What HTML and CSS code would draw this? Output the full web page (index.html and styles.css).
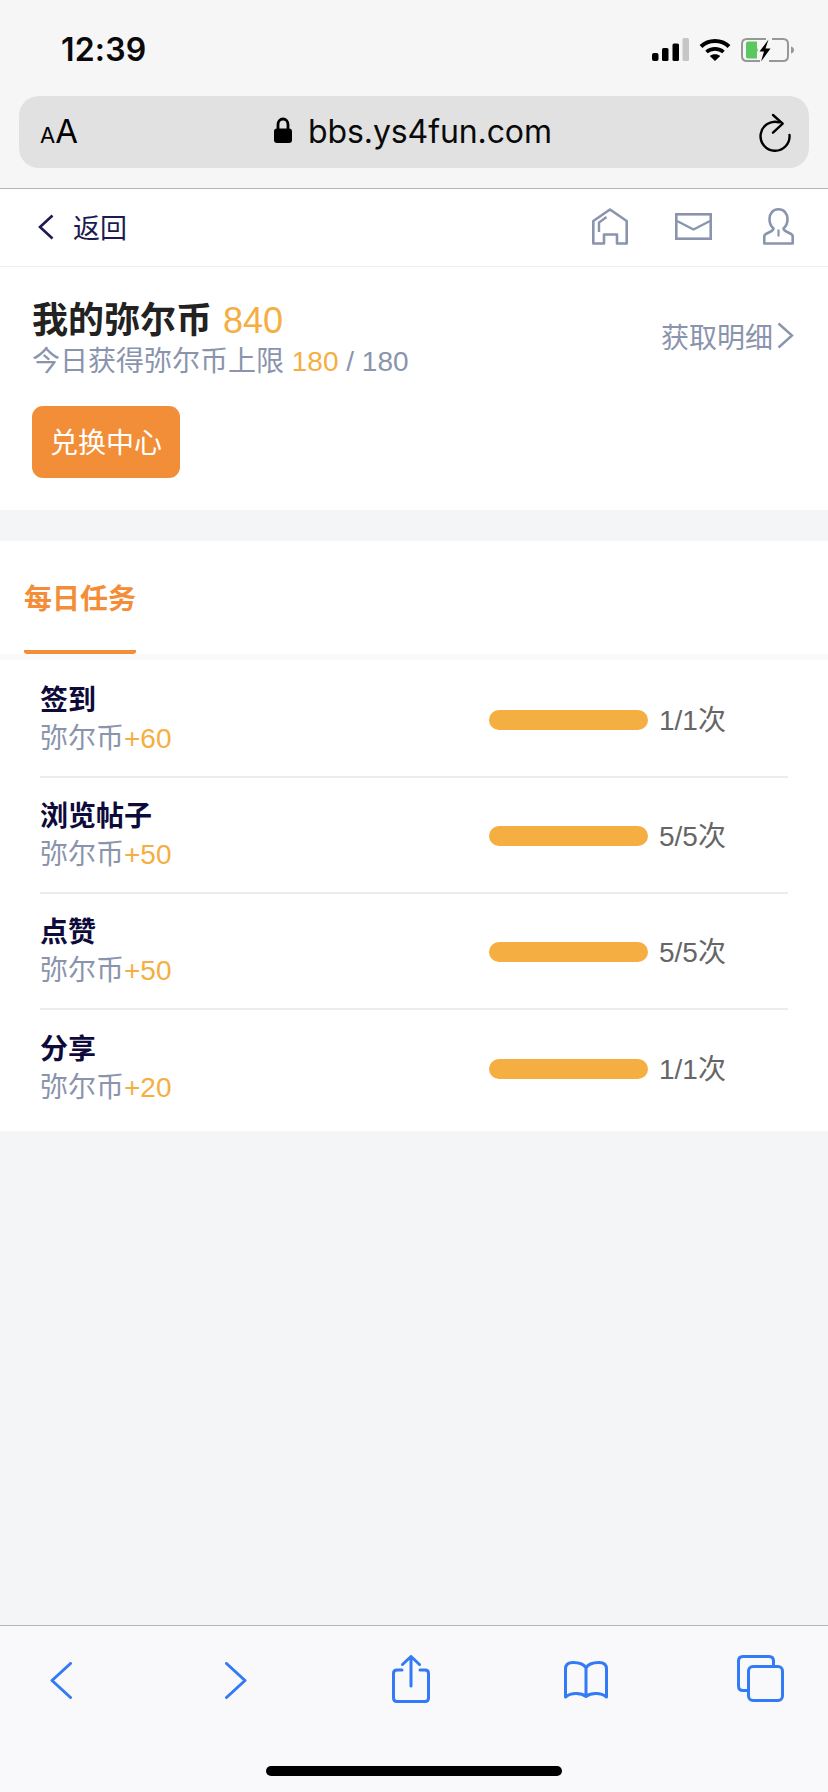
FILE: index.html
```html
<!DOCTYPE html>
<html lang="zh-CN">
<head>
<meta charset="utf-8">
<title>我的弥尔币</title>
<link rel="stylesheet" href="styles.css">
</head>
<body>
<div class="phone">
  <header class="chrome">
    <div class="status">
      <span class="time">12:39</span>
      <div class="status-icons">
        <svg class="signal" width="37" height="23" viewBox="0 0 37 23"><rect x="0" y="15" width="6.5" height="8" rx="2" fill="#000"/><rect x="10" y="10" width="6.5" height="13" rx="1.5" fill="#000"/><rect x="20.5" y="5.5" width="6.5" height="17.5" rx="1.5" fill="#000"/><rect x="30.500" y="0" width="6.500" height="23" rx="1.500" fill="#c6c6c6"/></svg>
        <svg class="wifi" width="32" height="23" viewBox="0 0 32 23"><path d="M2 8.500C9.500 1 22.500 1 30 8.500" fill="none" stroke="#000" stroke-width="4"/><path d="M7.500 14C12 9.800 20 9.800 24.500 14" fill="none" stroke="#000" stroke-width="3.600"/><path d="M16 23L10.800 18C13.500 15.800 18.500 15.800 21.200 18Z" fill="#000"/></svg>
        <svg class="battery" width="53" height="24" viewBox="0 0 53 24"><path d="M25 1H6Q1 1 1 6V18Q1 23 6 23H19M28 23H42Q47 23 47 18V6Q47 1 42 1H31" fill="none" stroke="#979797" stroke-width="2"/><path d="M7 3.500H16V10L17 12L16 14V20.500H7Q5 20.500 5 18.500V5.500Q5 3.500 7 3.500Z" fill="#5ac85f"/><path d="M27.500 1.500L18.500 13.500H23L20 23.500L29.500 10.500H24.500Z" fill="#000"/><path d="M50 8.500Q53 9.500 53 12Q53 14.500 50 15.500Z" fill="#979797"/></svg>
      </div>
    </div>
    <div class="urlbar">
      <span class="aa"><span class="aa-small">A</span><span class="aa-big">A</span></span>
      <div class="address">
        <svg class="lock" width="18" height="26" viewBox="0 0 18 26"><path d="M4 13V7.500C4 4.500 6 2 9 2C12 2 14 4.500 14 7.500V13" fill="none" stroke="#000" stroke-width="2.800"/><rect x="0" y="11.500" width="18" height="14.500" rx="3" fill="#000"/></svg>
        <span class="host">bbs.ys4fun.com</span>
      </div>
      <svg class="reload" width="34" height="39" viewBox="0 0 34 39"><path d="M21 9.300A14.500 14.500 0 1 0 31.500 22" fill="none" stroke="#000" stroke-width="2.400" stroke-linecap="round"/><path d="M15 2L24.700 10.700L15 19.700" fill="none" stroke="#000" stroke-width="2.400" stroke-linecap="round" stroke-linejoin="round"/></svg>
    </div>
  </header>

  <nav class="topnav">
    <div class="back">
      <svg width="16" height="26" viewBox="0 0 16 26"><path d="M14.500 1.500L2 13L14.500 24.500" fill="none" stroke="#1b1a52" stroke-width="2.600"/></svg>
      <span>返回</span>
    </div>
    <div class="nav-icons">
      <svg width="36" height="37" viewBox="0 0 36 37"><path d="M1.300 35.500V13L18 1.500L34.700 13V35.500H25V26.500H12V35.500Z" fill="none" stroke="#8a94ad" stroke-width="2.600" stroke-linejoin="round"/><path d="M7 24V14.500L14.500 9" fill="none" stroke="#8a94ad" stroke-width="2.400"/></svg>
      <svg class="nav-mail" width="37" height="27" viewBox="0 0 37 27"><rect x="1.300" y="1.300" width="34.400" height="24.400" fill="none" stroke="#8a94ad" stroke-width="2.600"/><path d="M2 8L18.500 16.500L35 8" fill="none" stroke="#8a94ad" stroke-width="2.400"/></svg>
      <svg width="31" height="37" viewBox="0 0 31 37"><path d="M1.300 35.500V28C1.300 25 10 24.500 10.500 20.500C7.500 18 6.500 14.500 6.500 11C6.500 5.500 10 1.300 15.500 1.300C21 1.300 24.500 5.500 24.500 11C24.500 14.500 23.500 18 20.500 20.500C21 24.500 29.700 25 29.700 28V35.500Z" fill="none" stroke="#8a94ad" stroke-width="2.600" stroke-linejoin="round"/><path d="M15.500 21.500V28.500" fill="none" stroke="#8a94ad" stroke-width="2.200"/></svg>
    </div>
  </nav>

  <section class="coin-card">
    <div class="coin-top">
      <div>
        <div class="coin-title"><strong>我的弥尔币</strong><span class="coin-count">840</span></div>
        <div class="coin-limit">今日获得弥尔币上限 <span class="orange">180</span> / 180</div>
      </div>
      <div class="detail">
        <span>获取明细</span>
        <svg width="17" height="27" viewBox="0 0 17 27"><path d="M1.500 1.500L15 13.500L1.500 25.500" fill="none" stroke="#8a94ad" stroke-width="2.400"/></svg>
      </div>
    </div>
    <div class="exchange">兑换中心</div>
  </section>

  <section class="tabs">
    <div class="tab">每日任务</div>
  </section>
  <div class="tab-shade"></div>

  <ul class="tasks">
    <li class="task">
      <div class="task-info"><div class="task-name">签到</div><div class="task-reward">弥尔币<span class="orange">+60</span></div></div>
      <div class="task-progress"><div class="bar"></div><span class="count">1/1次</span></div>
    </li>
    <li class="task">
      <div class="task-info"><div class="task-name">浏览帖子</div><div class="task-reward">弥尔币<span class="orange">+50</span></div></div>
      <div class="task-progress"><div class="bar"></div><span class="count">5/5次</span></div>
    </li>
    <li class="task">
      <div class="task-info"><div class="task-name">点赞</div><div class="task-reward">弥尔币<span class="orange">+50</span></div></div>
      <div class="task-progress"><div class="bar"></div><span class="count">5/5次</span></div>
    </li>
    <li class="task">
      <div class="task-info"><div class="task-name">分享</div><div class="task-reward">弥尔币<span class="orange">+20</span></div></div>
      <div class="task-progress"><div class="bar"></div><span class="count">1/1次</span></div>
    </li>
  </ul>

  <div class="spacer"></div>

  <footer class="toolbar">
    <div class="tools">
      <div class="tool"><svg width="22" height="37" viewBox="0 0 22 37"><path d="M20.500 1.500L2 18.500L20.500 35.500" fill="none" stroke="#327af6" stroke-width="3" stroke-linecap="round" stroke-linejoin="round"/></svg></div>
      <div class="tool"><svg width="22" height="37" viewBox="0 0 22 37"><path d="M1.500 1.500L20 18.500L1.500 35.500" fill="none" stroke="#327af6" stroke-width="3" stroke-linecap="round" stroke-linejoin="round"/></svg></div>
      <div class="tool"><svg class="tool-up" width="38" height="48" viewBox="0 0 38 48"><path d="M10 15H5Q1.500 15 1.500 18.500V43Q1.500 46.500 5 46.500H33Q36.500 46.500 36.500 43V18.500Q36.500 15 33 15H28M19 31V2M10.500 9.500L19 1.500L27.500 9.500" fill="none" stroke="#327af6" stroke-width="3" stroke-linecap="round" stroke-linejoin="round"/></svg></div>
      <div class="tool"><svg width="44" height="38" viewBox="0 0 44 38"><path d="M22 35.500C17 31.500 7 31.500 1.500 36V8C1.500 4 4 1.500 9 1.500C15 1.500 20 3 22 7C24 3 29 1.500 35 1.500C40 1.500 42.500 4 42.500 8V36C37 31.500 27 31.500 22 35.500ZM22 7V35.500" fill="none" stroke="#327af6" stroke-width="3" stroke-linejoin="round"/></svg></div>
      <div class="tool"><svg class="tool-up" width="47" height="47" viewBox="0 0 47 47"><path d="M11 35.500H6Q1.500 35.500 1.500 31V6Q1.500 1.500 6 1.500H32Q36.500 1.500 36.500 6V11" fill="none" stroke="#327af6" stroke-width="3"/><rect x="11.500" y="11.500" width="34" height="34" rx="4.500" fill="none" stroke="#327af6" stroke-width="3"/></svg></div>
    </div>
    <div class="home-bar"></div>
  </footer>
</div>
</body>
</html>
```
FILE: styles.css
```css
* { box-sizing: border-box; }
html, body { margin: 0; padding: 0; }
body {
  width: 828px;
  height: 1792px;
  overflow: hidden;
  font-family: "Liberation Sans", "Noto Sans CJK SC", sans-serif;
  background: #f4f5f7;
}
.phone { display: flex; flex-direction: column; height: 1792px; }
.orange { color: #f5ae42; }

.chrome { height: 189px; background: #f6f6f6; border-bottom: 1px solid #b4b4b4; padding: 0 19px; font-family: "Inter", sans-serif; }
.status { height: 96px; display: flex; justify-content: space-between; padding: 32px 0 0 42px; align-items: flex-start; }
.time { font-size: 32px; font-weight: 600; line-height: 35px; color: #0a0a0a; letter-spacing: .2px; }
.status-icons { display: flex; align-items: flex-start; gap: 10px; padding: 6px 15px 0 0; }
.urlbar { height: 72px; background: #e1e1e1; border-radius: 20px; display: flex; align-items: center; padding: 0 17px 0 22px; }
.aa { display: flex; align-items: baseline; color: #000; width: 40px; margin-top: 2px; }
.aa-small { font-size: 22px; line-height: 36px; font-weight: 400; margin-left: -1px; }
.aa-big { font-size: 33px; line-height: 36px; font-weight: 400; }
.address { flex: 1; display: flex; align-items: center; gap: 16px; padding-left: 193px; }
.host { font-size: 32px; color: #0a0a0a; line-height: 40px; letter-spacing: -.1px; }
.lock { margin-top: -4px; }

.topnav { height: 78px; background: #fff; border-bottom: 1px solid #eeeeee; display: flex; justify-content: space-between; align-items: center; padding: 0 34px 2px 38px; }
.back { display: flex; align-items: center; gap: 19px; color: #1b1a52; font-size: 27px; font-family: "Noto Sans CJK SC", sans-serif; }
.nav-icons { display: flex; align-items: center; gap: 48px; }
.nav-mail { margin: 0 3px 0 -1px; }

.coin-card { height: 243px; background: #fff; padding: 32px 34px 0 32px; }
.coin-top { display: flex; justify-content: space-between; align-items: center; }
.coin-title { font-size: 36px; line-height: 44px; color: #222; display: flex; align-items: baseline; gap: 11px; }
.coin-title strong { font-weight: 700; }
.coin-count { color: #f5ae42; font-weight: 400; }
.coin-limit { font-size: 28px; line-height: 34px; color: #8a94ad; margin-top: 2px; }
.detail { display: flex; align-items: center; gap: 4px; font-size: 28px; color: #8a94ad; padding-bottom: 7px; }
.exchange { width: 148px; height: 72px; background: #f28e37; border-radius: 11px; color: #fff; font-size: 28px; line-height: 75px; text-align: center; margin-top: 27px; }

.tabs { margin-top: 31px; height: 113px; background: #fff; padding-left: 24px; }
.tab { width: 112px; height: 113px; padding-top: 5px; border-bottom: 4px solid #f28e37; border-radius: 0 0 3px 3px; color: #f38d37; font-size: 28px; font-weight: 700; line-height: 108px; text-align: center; white-space: nowrap; }
.tab-shade { height: 6px; background: #fafafb; }

.tasks { list-style: none; margin: 0; padding: 2px 40px 0; background: #fff; height: 471px; }
.task { height: 116px; display: flex; align-items: center; justify-content: space-between; border-bottom: 2px solid #ececee; padding: 2px 62px 0 0; }
.task:last-child { border-bottom: 0; }
.task-name { font-size: 28px; line-height: 38px; font-weight: 700; color: #0e0b3b; }
.task-reward { font-size: 28px; line-height: 38px; color: #8a94ad; }
.task-progress { display: flex; align-items: center; gap: 10px; }
.bar { width: 159px; height: 20px; border-radius: 10px; background: #f4ae42; }
.count { font-size: 28px; line-height: 38px; color: #666; width: 68px; white-space: nowrap; padding: 2px 0 0 1px; }

.spacer { flex: 1; background: #f4f5f7; }

.toolbar { height: 167px; background: #f9f9fb; border-top: 1px solid #b4b4b4; position: relative; }
.tools { display: flex; gap: 115px; padding: 28px 0 0 30.500px; align-items: flex-start; height: 80px; }
.tool { width: 60px; height: 52px; display: flex; align-items: center; justify-content: center; }
.tool-up { margin-bottom: 3px; }
.home-bar { position: absolute; left: 266px; top: 140px; width: 296px; height: 10px; background: #000; border-radius: 5px; }
```
